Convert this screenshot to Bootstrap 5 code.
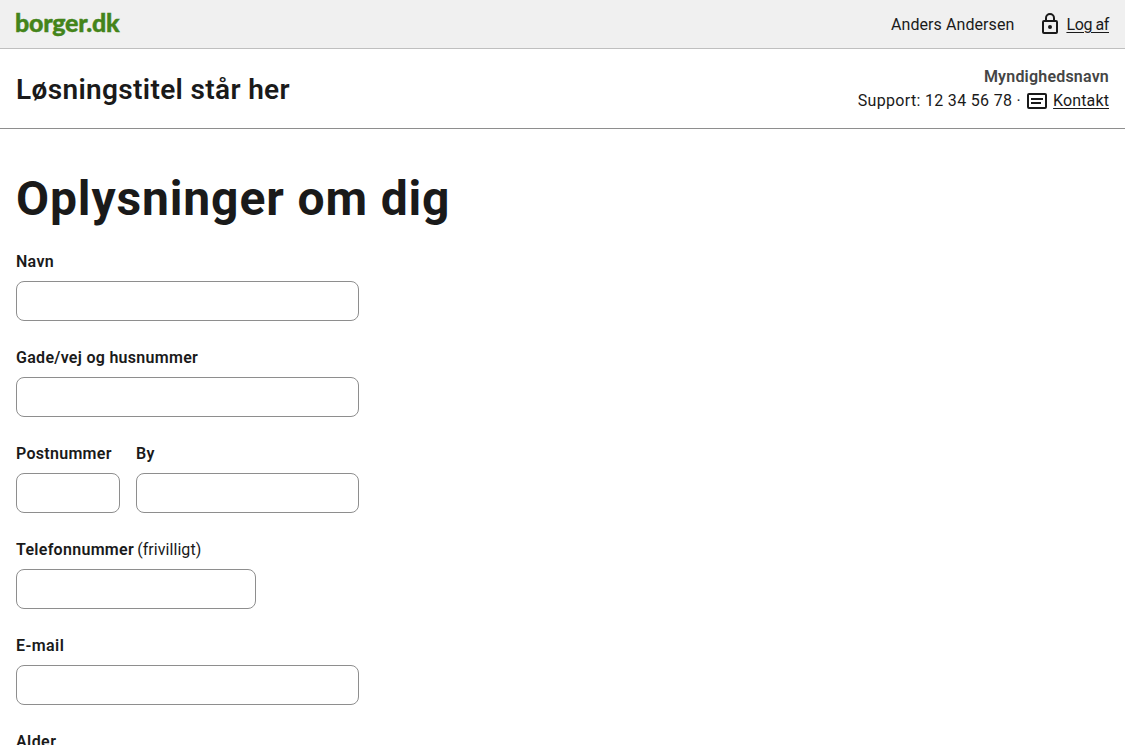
<!DOCTYPE html>
<html lang="da">
<head>
<meta charset="utf-8">
<meta name="viewport" content="width=device-width, initial-scale=1">
<title>Oplysninger om dig – borger.dk</title>
<link href="https://cdn.jsdelivr.net/npm/bootstrap@5.3.0/dist/css/bootstrap.min.css" rel="stylesheet">
<style>
  html { overflow: hidden; }
  body { font-family: Roboto, sans-serif; font-size: 16px; line-height: 24px; color: #1a1a1a; letter-spacing: .12px; height: 100vh; overflow: hidden; }
  svg { display: block; flex: none; }
  a { color: #1a1a1a; text-underline-offset: 2px; text-decoration-thickness: 1px; }
  a:hover { color: #1a1a1a; }
  .topbar { height: 49px; background: #f0f0f0; border-bottom: 1px solid #bfbfbf; }
  .topbar .user, .topbar .logout { padding-top: 2px; }
  .logo { font: 900 25px/32px Lato, sans-serif; letter-spacing: -.27px; -webkit-text-stroke: .4px #44841a; color: #44841a; margin: -4px 0 0 -1px; text-decoration: none; }
  .titlebar { height: 80px; border-bottom: 1px solid #8e8e8e; }
  .solution { font-size: 28px; line-height: 36px; font-weight: 600; letter-spacing: .35px; padding-top: 2px; }
  .authority { font-weight: 600; color: #454545; letter-spacing: .2px; }
  .support { letter-spacing: .32px; }
  .user { letter-spacing: .08px; }
  .logout { letter-spacing: -.4px; }
  .page-title { font-size: 48px; line-height: 60px; font-weight: 700; letter-spacing: .87px; margin: 40px 0 20px; }
  .form-label { display: block; font-weight: 600; letter-spacing: .29px; padding-top: 1px; margin-bottom: 7px; white-space: nowrap; }
  .form-label span { font-weight: 400; letter-spacing: .05px; margin-left: -1px; }
  .form-control { height: 40px; border: 1px solid #8e8e8e; border-radius: 8px; }
  .fields { width: 343px; }
  .zip { width: 104px; flex: none; }
  .phone { width: 240px; }
  .wide-spaced { letter-spacing: .42px; }
</style>
</head>
<body>
<header>
  <div class="topbar d-flex justify-content-between align-items-center px-3">
    <a class="logo" href="#">borger.dk</a>
    <div class="d-flex align-items-center">
      <span class="user me-4">Anders Andersen</span>
      <svg class="me-1" width="24" height="24" viewBox="0 0 24 24" fill="none" stroke="#1a1a1a" stroke-width="2" aria-hidden="true">
        <rect x="5" y="9" width="14" height="12" rx="1"/>
        <path d="M8 9V6a4 4 0 0 1 8 0v3"/>
        <circle cx="12" cy="15" r="2" fill="#1a1a1a" stroke="none"/>
      </svg>
      <a class="logout" href="#">Log af</a>
    </div>
  </div>
  <div class="titlebar d-flex justify-content-between align-items-center px-3">
    <div class="solution">Løsningstitel står her</div>
    <div class="text-end">
      <div class="authority">Myndighedsnavn</div>
      <div class="d-flex align-items-center">
        <span class="support me-1">Support: 12 34 56 78 ·</span>
        <svg class="me-1" width="24" height="24" viewBox="0 0 24 24" fill="none" stroke="#1a1a1a" stroke-width="2" aria-hidden="true">
          <rect x="3" y="5" width="18" height="14" rx="1"/>
          <path d="M6 10h12M6 14h10"/>
        </svg>
        <a href="#">Kontakt</a>
      </div>
    </div>
  </div>
</header>
<main class="px-3">
  <h1 class="page-title">Oplysninger om dig</h1>
  <form class="fields d-flex flex-column gap-4">
    <div><label class="form-label" for="navn">Navn</label><input id="navn" class="form-control"></div>
    <div><label class="form-label" for="gade">Gade/vej og husnummer</label><input id="gade" class="form-control"></div>
    <div class="d-flex gap-3">
      <div class="zip"><label class="form-label" for="post">Postnummer</label><input id="post" class="form-control"></div>
      <div class="flex-grow-1"><label class="form-label" for="by">By</label><input id="by" class="form-control"></div>
    </div>
    <div class="phone"><label class="form-label" for="tlf">Telefonnummer <span>(frivilligt)</span></label><input id="tlf" class="form-control"></div>
    <div><label class="form-label wide-spaced" for="mail">E-mail</label><input id="mail" class="form-control"></div>
    <div><label class="form-label wide-spaced" for="alder">Alder</label><input id="alder" class="form-control"></div>
  </form>
</main>
<script src="https://cdn.jsdelivr.net/npm/bootstrap@5.3.0/dist/js/bootstrap.bundle.min.js"></script>
</body>
</html>
